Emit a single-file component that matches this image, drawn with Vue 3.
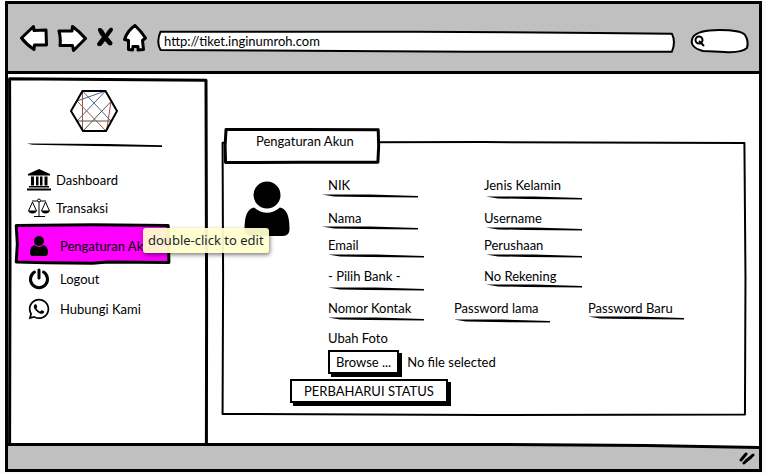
<script setup>
import { ref } from 'vue'

const address = ref('http://tiket.inginumroh.com')
const query = ref('')
const fileName = ref('No file selected')
const picker = ref(null)

const mainFields = [
  { id: 'nik', label: 'NIK', rule: 'outdent' },
  { id: 'gender', label: 'Jenis Kelamin', rule: 'indent loose' },
  { id: 'name', label: 'Nama', rule: 'outdent tight' },
  { id: 'username', label: 'Username', rule: 'indent' },
  { id: 'email', label: 'Email', rule: '' },
  { id: 'company', label: 'Perushaan', rule: 'indent' },
  { id: 'bank', label: '- Pilih Bank -', rule: 'loose', select: true },
  { id: 'account', label: 'No Rekening', rule: 'indent tight' }
]

const contactFields = [
  { id: 'phone', label: 'Nomor Kontak', rule: '', type: 'tel' },
  { id: 'old-password', label: 'Password lama', rule: 'loose', type: 'password' },
  { id: 'new-password', label: 'Password Baru', rule: 'tight', type: 'password' }
]

function onFile(event) {
  const file = event.target.files[0]
  fileName.value = file ? file.name : 'No file selected'
}
</script>

<template>
  <div class="window">
    <header class="toolbar">
      <nav class="controls" aria-label="Browser">
        <button type="button" class="tool" aria-label="Back">
          <svg width="28" height="28" viewBox="0 0 28 28"><path class="shape" d="M1.500 14 L13.500 2.500 L14 6.500 L26 6 L26.500 21 L14.500 21 L14 25.500 Q6 20 1.500 14Z" /></svg>
        </button>
        <button type="button" class="tool" aria-label="Forward">
          <svg width="30" height="28" viewBox="0 0 30 28"><path class="shape" d="M2 7 L15 7 L15.500 2.500 Q23 8 28.500 14.500 L16.500 26.500 L15.500 21.500 L3 21.500 Q4 14 2 7Z" /></svg>
        </button>
        <button type="button" class="tool" aria-label="Stop">
          <svg width="18" height="28" viewBox="0 0 18 28"><path d="M2 4.500 Q5 3 7 6 L9.500 10 Q12 5 15 3.500 Q18 4 16.500 7 L12 13 L16.500 18.500 Q16.500 22.500 12.500 21 L9 17 L5.500 21.500 Q1 23.500 1 19.500 L6 13 Q1.500 8 2 4.500Z" /></svg>
        </button>
        <button type="button" class="tool" aria-label="Home">
          <svg width="24" height="28" viewBox="0 0 24 28"><path class="shape" d="M12 1.500 Q18 7 22.500 14 L19.500 16.500 L20.500 25.500 L15 26 L15 22.500 L10 22.500 L9.500 26 L5.500 25.500 L5.500 16.500 L1.500 15.500 Q4.500 6.500 12 1.500Z" /></svg>
        </button>
      </nav>
      <div class="address">
        <svg class="sketch" viewBox="0 0 100 100" preserveAspectRatio="none" aria-hidden="true">
          <path class="white" d="M.5 3 L50 3 L85 9 L99.400 12 Q100.200 50 99.400 94 L60 94 L20 89 L.5 86 Q-.4 50 .5 3Z" />
        </svg>
        <input v-model="address" type="text" aria-label="Address">
      </div>
      <div class="search">
        <svg class="sketch" viewBox="0 0 58 24" preserveAspectRatio="none" aria-hidden="true">
          <path class="white" d="M2 8 Q7 1 28 1 Q50 1 54 6 Q58 12 56 19 Q50 24 34 23 L12 22 Q-3 18 2 8Z" />
        </svg>
        <svg class="lens" width="12" height="12" viewBox="0 0 12 12" aria-hidden="true"><circle cx="5" cy="5" r="3.500" /><path d="M5 6 L10 11" /></svg>
        <input v-model="query" type="text" aria-label="Search">
      </div>
    </header>

    <div class="page">
      <aside class="sidebar">
        <svg class="sketch" viewBox="0 0 100 100" preserveAspectRatio="none" aria-hidden="true">
          <path d="M.8 .2 L50 .4 L99 .6 L99.300 60 L99.200 99.600 L.8 99.500 L1 50Z" />
        </svg>
        <svg class="logo" width="48" height="44" viewBox="0 0 48 44" role="img" aria-label="Logo">
          <path class="blue" d="M12.500 2 L41 32 M35.500 2 L7 32 M35.500 2 L7 12" />
          <path class="red" d="M12.500 2 V42 M7 12 L36 42 M41 12.500 L36.500 42" />
          <path class="grey" d="M41 12.500 L13 42 M7 32 H41" />
          <path class="hex" d="M1 22 L12.500 2 H35.500 L47 22 L36 42 H13Z" />
        </svg>
        <svg class="divider" viewBox="0 0 100 4" preserveAspectRatio="none" aria-hidden="true"><path d="M0 .5 L60 1 L100 2.300 V4 L50 3 L4 1.800Z" /></svg>

        <nav class="menu" aria-label="Menu">
          <a href="#dashboard" class="item short">
            <svg class="icon" width="24" height="22" viewBox="0 0 24 22"><path d="M12 0 L23 5 V6.500 H1 V5Z M4 7.500 H7 V16.500 H4Z M9 7.500 H11.500 V16.500 H9Z M13 7.500 H15.500 V16.500 H13Z M17.500 7.500 H20.500 V16.500 H17.500Z M2 17 H22 V18.500 H2Z M0 19.500 H24 V21.500 H0Z" /></svg>
            <span>Dashboard</span>
          </a>
          <a href="#transaksi" class="item short">
            <svg class="icon" width="24" height="20" viewBox="0 0 24 20"><path class="thin" d="M5 3 H19 M12 3.500 V18 M7 18.500 H18 M1.500 13 L5.500 4 L9.500 13 M14.500 13 L18.500 4 L22.500 13" /><circle class="thin white" cx="12" cy="2.500" r="1.500" /><path d="M1 12.500 H10 Q9 15.500 5.500 15.500 Q2 15.500 1 12.500Z M14 12.500 H23 Q22 15.500 18.500 15.500 Q15 15.500 14 12.500Z" /></svg>
            <span>Transaksi</span>
          </a>
          <div class="active">
            <svg class="sketch" viewBox="0 0 100 100" preserveAspectRatio="none" aria-hidden="true">
              <path class="pink" d="M.8 4 L50 2 L98.800 4 L99.300 96 L60 95 L50 98 L20 97 L.8 95 L1.500 50Z" />
            </svg>
            <a href="#akun" class="item" aria-current="page">
              <svg class="icon" width="22" height="22" viewBox="0 0 22 22"><circle cx="11" cy="6" r="5" /><path d="M6.500 10 Q11 14 15.500 10 Q20 11 20 18 Q20 21 17 21 H5 Q2 21 2 18 Q2 11 6.500 10Z" /></svg>
              <span>Pengaturan Akun</span>
            </a>
            <div class="tooltip" role="tooltip">double-click to edit</div>
          </div>
          <a href="#logout" class="item">
            <svg class="icon" width="22" height="22" viewBox="0 0 22 22"><path class="power" d="M6.500 4 A8.500 8.500 0 1 0 15.500 4 M11 2 V10" /></svg>
            <span>Logout</span>
          </a>
          <a href="#kontak" class="item">
            <svg class="icon" width="22" height="22" viewBox="-16 16 480 480"><path d="M380.900 97.100C339 55.100 283.200 32 223.900 32c-122.400 0-222 99.600-222 222 0 39.100 10.200 77.300 29.600 111L0 480l117.700-30.900c32.400 17.700 68.900 27 106.100 27h.1c122.300 0 224.100-99.600 224.100-222 0-59.300-25.200-115-67.100-157zm-157 341.600c-33.200 0-65.700-8.900-94-25.700l-6.700-4-69.800 18.300L72 359.200l-4.400-7c-18.500-29.400-28.200-63.300-28.200-98.200 0-101.700 82.800-184.500 184.600-184.500 49.300 0 95.600 19.200 130.400 54.100 34.800 34.900 56.200 81.200 56.100 130.500 0 101.800-84.900 184.600-186.600 184.600zm101.200-138.200c-5.500-2.800-32.800-16.200-37.900-18-5.100-1.900-8.800-2.800-12.500 2.800-3.700 5.600-14.300 18-17.600 21.800-3.200 3.700-6.500 4.200-12 1.400-32.600-16.300-54-29.100-75.500-66-5.700-9.800 5.700-9.100 16.300-30.300 1.800-3.700.9-6.900-.5-9.700-1.400-2.800-12.500-30.100-17.100-41.200-4.500-10.800-9.100-9.300-12.500-9.500-3.200-.2-6.900-.2-10.600-.2-3.700 0-9.700 1.400-14.800 6.900-5.100 5.600-19.400 19-19.400 46.300 0 27.300 19.900 53.700 22.600 57.400 2.800 3.700 39.100 59.700 94.800 83.800 35.200 15.200 49 16.500 66.600 13.900 10.700-1.600 32.800-13.400 37.400-26.400 4.600-13 4.600-24.100 3.200-26.400-1.300-2.500-5-3.900-10.500-6.600z" /></svg>
            <span>Hubungi Kami</span>
          </a>
        </nav>
      </aside>

      <main class="main">
        <form class="card" @submit.prevent>
          <svg class="sketch thin-frame" viewBox="0 0 100 100" preserveAspectRatio="none" aria-hidden="true">
            <path d="M.3 .6 L50 .4 L99.700 .7 L99.900 50 L99.800 99.800 L50 100 L.3 99.600 L.4 50Z" />
          </svg>
          <h1 class="tab">
            <svg class="sketch" viewBox="0 0 100 100" preserveAspectRatio="none" aria-hidden="true">
              <path class="white" d="M1.300 4 L50 4 L99 5 L99.300 50 L98.800 95 L50 95 L1 96 L.7 50Z" />
            </svg>
            <span>Pengaturan Akun</span>
          </h1>
          <div class="content">
            <svg class="avatar" width="46" height="56" viewBox="0 0 46 56" role="img" aria-label="Foto"><circle cx="23" cy="14" r="13.500" /><path d="M10 26.500 Q23 37 36 26.500 Q45.500 28 45.500 48 Q45.500 55 39 55 H7 Q.5 55 .5 48 Q.5 28 10 26.500Z" /></svg>
            <div class="fields">
              <div class="grid">
                <div v-for="f in mainFields" :key="f.id" class="field" :class="f.rule">
                  <select v-if="f.select" :id="f.id" :aria-label="f.label"><option>{{ f.label }}</option></select>
                  <input v-else :id="f.id" type="text" :placeholder="f.label" :aria-label="f.label">
                  <svg class="rule" viewBox="0 0 96 4" preserveAspectRatio="none" aria-hidden="true"><path d="M0 .4 L48 .6 L96 2 V3.600 L40 3 L12 2.400Z" /></svg>
                </div>
              </div>
              <div class="contact">
                <div v-for="f in contactFields" :key="f.id" class="field" :class="f.rule">
                  <input :id="f.id" :type="f.type" :placeholder="f.label" :aria-label="f.label">
                  <svg class="rule" viewBox="0 0 96 4" preserveAspectRatio="none" aria-hidden="true"><path d="M0 .4 L48 .6 L96 2 V3.600 L40 3 L12 2.400Z" /></svg>
                </div>
              </div>
              <label class="upload-label" for="photo">Ubah Foto</label>
              <div class="upload">
                <button type="button" class="button small" @click="picker.click()">Browse ...</button>
                <input id="photo" ref="picker" class="picker" type="file" @change="onFile">
                <output for="photo">{{ fileName }}</output>
              </div>
            </div>
          </div>
          <button type="submit" class="button submit">PERBAHARUI STATUS</button>
        </form>
      </main>
    </div>

    <footer class="status">
      <svg class="edge" viewBox="0 0 100 6" preserveAspectRatio="none" aria-hidden="true"><path class="white" d="M0 0 H100 V4.500 L85 2.500 L65 1.500 H0Z" /><path class="stroke" d="M0 1.500 H65 L85 2.500 L100 4.500" /></svg>
      <svg class="grip" width="18" height="14" viewBox="0 0 18 14" aria-hidden="true"><path d="M3 9 L8 3 M6 12 L15 4 M8 10 L13 6" /></svg>
    </footer>
  </div>
</template>

<style>
body {
  margin: 0;
  background: #fafafa;
}
</style>

<style scoped>
.window,
.window * {
  box-sizing: border-box;
}

.window {
  display: flex;
  flex-direction: column;
  min-height: calc(100vh - 2px);
  margin: 1px 4px 1px 5px;
  border: 3px solid #000;
  background: #fff;
  color: #000;
  font: 13px/18px Lato, "Liberation Sans", sans-serif;
}

input,
select,
button {
  margin: 0;
  padding: 0;
  border: 0;
  background: none;
  color: inherit;
  font: inherit;
}

input,
select {
  display: block;
  width: 100%;
  height: 18px;
  outline: 0;
  appearance: none;
}

.picker {
  display: none;
}

input::placeholder {
  color: #000;
  opacity: 1;
}

button {
  cursor: pointer;
}

.sketch {
  position: absolute;
  inset: 0;
  z-index: -1;
  width: 100%;
  height: 100%;
  overflow: visible;
}

.sketch path {
  fill: none;
  stroke: #000;
  stroke-width: 3px;
  stroke-linejoin: round;
  vector-effect: non-scaling-stroke;
}

.thin-frame path {
  stroke-width: 2px;
}

.sketch .white,
.white {
  fill: #fff;
}

.sketch .pink {
  fill: #f0f;
}

.toolbar {
  display: flex;
  align-items: center;
  height: 70px;
  padding: 0 10px 0 12px;
  border-bottom: 3px solid #000;
  background: #c0c0c0;
}

.controls {
  display: flex;
  gap: 9px;
}

.tool svg {
  display: block;
}

.shape {
  fill: #fff;
  stroke: #000;
  stroke-width: 3px;
  stroke-linejoin: round;
}

.address,
.search,
.sidebar,
.active,
.card,
.tab {
  position: relative;
  z-index: 0;
}

.address {
  flex: 1;
  height: 22px;
  margin: 8px 16px 0 11px;
  padding: 1px 6px;
}

.address .sketch path,
.search .sketch path {
  stroke-width: 2px;
}

.search {
  display: flex;
  align-items: center;
  gap: 4px;
  width: 58px;
  height: 24px;
  margin-top: 6px;
  padding: 0 3px;
}

.lens {
  flex: none;
  fill: none;
  stroke: #000;
  stroke-width: 2px;
}

.page {
  display: flex;
  flex: 1;
}

.sidebar {
  z-index: 1;
  display: flex;
  flex: none;
  flex-direction: column;
  width: 200px;
  margin: 4px 0 -3px;
  padding-top: 11px;
}

.logo {
  margin-left: 62px;
  fill: none;
  stroke-width: 1px;
}

.blue {
  stroke: #4a6391;
}

.red {
  stroke: #a5503f;
}

.grey {
  stroke: #555;
}

.hex {
  stroke: #000;
  stroke-width: 2px;
}

.divider {
  width: 135px;
  height: 4px;
  margin: 10px 0 19px 19px;
}

.menu {
  display: flex;
  flex-direction: column;
}

.item {
  display: flex;
  align-items: center;
  gap: 10px;
  height: 30px;
  padding-left: 20px;
  color: #000;
  text-decoration: none;
}

.item.short {
  gap: 5px;
  height: 28px;
  padding-left: 19px;
}

.icon {
  flex: none;
}

.thin {
  fill: none;
  stroke: #000;
  stroke-width: 1px;
}

circle.white {
  fill: #fff;
}

.power {
  fill: none;
  stroke: #000;
  stroke-width: 3px;
  stroke-linecap: round;
}

.active {
  z-index: 2;
  width: 155px;
  height: 40px;
  margin: 2px 0 0 7px;
}

.active .item {
  height: 44px;
  padding-left: 13px;
}

.tooltip {
  position: absolute;
  top: 4px;
  left: 128px;
  padding: 4px 5px;
  border-radius: 3px;
  background: rgba(255, 255, 204, .94);
  box-shadow: 1px 2px 4px rgba(0, 0, 0, .5);
  color: #223;
  font: 13px/17px "Noto Sans", sans-serif;
  white-space: nowrap;
}

.main {
  flex: 1;
  padding: 67px 13px 28px;
}

.card {
  min-height: 274px;
}

.tab {
  top: -13px;
  width: fit-content;
  margin: 0 0 0 3px;
  padding: 4px 26px 14px 32px;
  font: inherit;
}

.content {
  display: flex;
  gap: 38px;
  margin-top: -1px;
  padding-left: 23px;
}

.avatar {
  flex: none;
  margin-top: 5px;
}

.fields {
  flex: 1;
}

.grid {
  display: grid;
  grid-template-columns: 156px 156px;
  grid-template-rows: 33px 27px 31px 32px;
}

.contact {
  display: grid;
  grid-template-columns: 126px 134px 100px;
  height: 30px;
}

.field {
  width: 100px;
}

.rule {
  display: block;
  width: 96px;
  height: 4px;
  margin-top: 0;
}

.tight .rule {
  margin-top: -1px;
}

.loose .rule {
  margin-top: 2px;
}

.outdent .rule {
  margin-left: -6px;
}

.indent .rule {
  margin-left: 2px;
}

.upload-label {
  display: block;
}

.upload {
  display: flex;
  align-items: center;
  gap: 8px;
  padding-top: 3px;
}

.button {
  height: 24px;
  padding: 0 12px;
  border: 2px solid #000;
  background: #fff;
  box-shadow: 3px 3px 0 #000;
  line-height: 18px;
  white-space: nowrap;
}

.button.small {
  padding: 0 6px;
}

.submit {
  display: block;
  margin: 5px 0 0 69px;
}

.status {
  display: flex;
  flex-direction: column;
  height: 26px;
  background: #c0c0c0;
}

.edge {
  display: block;
  width: 100%;
  height: 6px;
}

.stroke {
  fill: none;
  stroke: #000;
  stroke-width: 3px;
  vector-effect: non-scaling-stroke;
}

.grip {
  align-self: flex-end;
  margin: 2px 3px 0 0;
  fill: none;
  stroke: #000;
  stroke-width: 3px;
  stroke-linecap: round;
}
</style>
